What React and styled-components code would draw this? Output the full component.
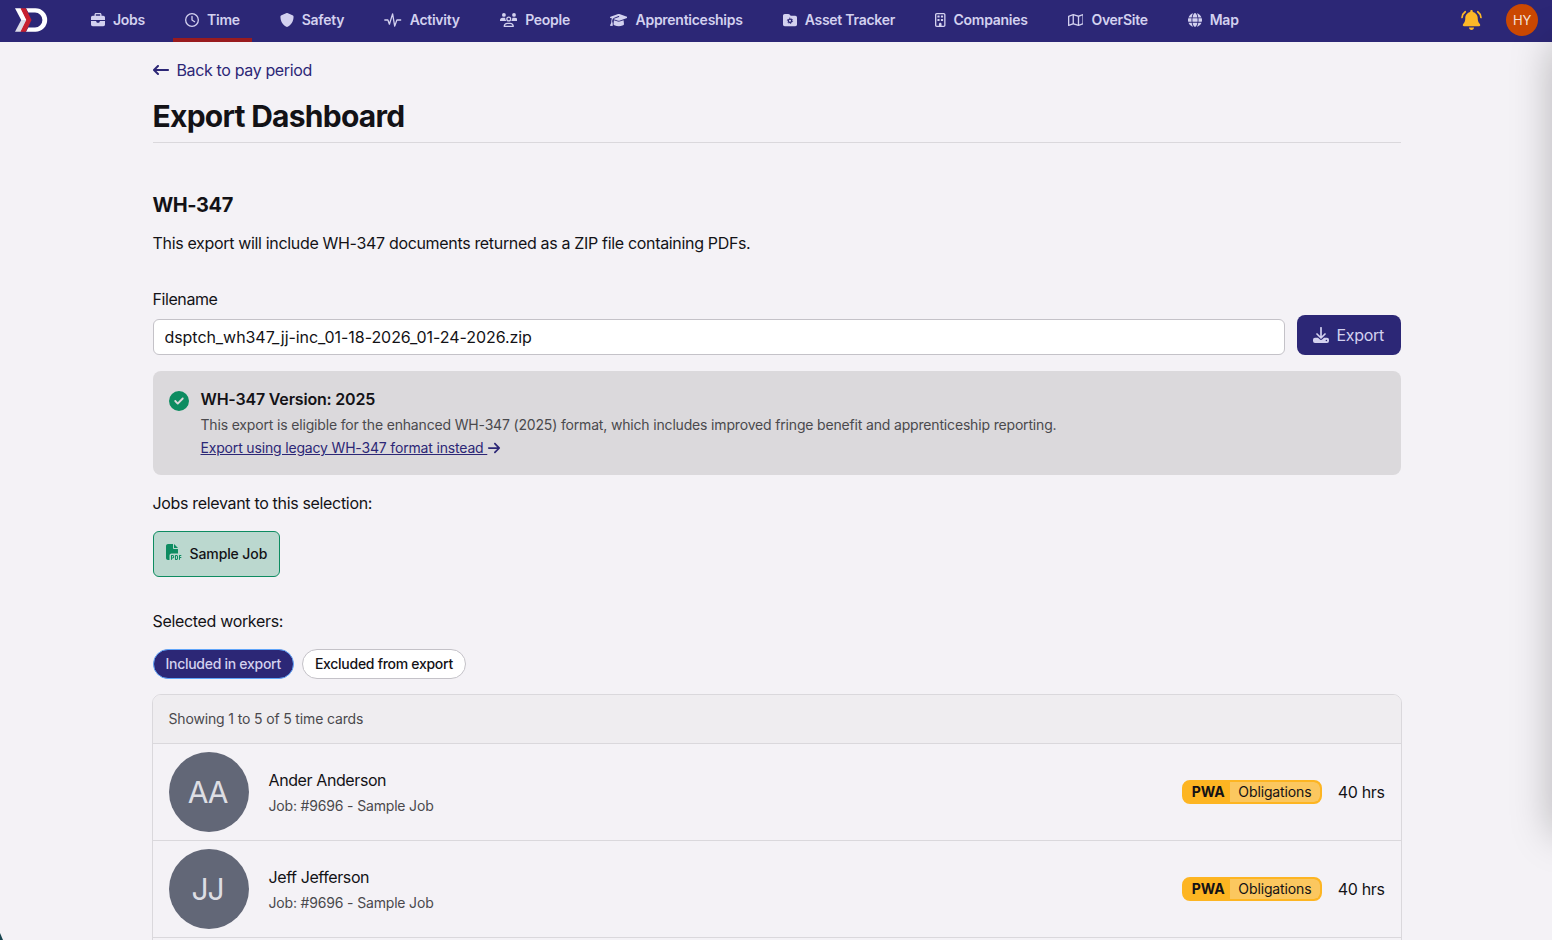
import React from 'react'
import styled, { createGlobalStyle } from 'styled-components'
import {
    FaBriefcase,
    FaRegClock,
    FaShield,
    FaGraduationCap,
    FaRegBuilding,
    FaRegMap,
    FaGlobe,
    FaArrowLeftLong,
    FaArrowRight,
    FaCircleCheck,
    FaFilePdf,
} from 'react-icons/fa6'

const GlobalStyle = createGlobalStyle`
    *, *::before, *::after {
        box-sizing: border-box;
    }

    body {
        margin: 0;
        background: #f4f2f6;
        color: #131216;
        font-family: Inter, 'Liberation Sans', sans-serif;
        font-size: 16px;
        line-height: 24px;
        letter-spacing: -0.36px;
        overflow: hidden;
    }

    h1, h2, h3, p {
        margin: 0;
    }

    button, input {
        font: inherit;
        letter-spacing: inherit;
    }

    svg {
        display: block;
        flex: none;
    }
`

const Logo = () => (
    <svg width="34" height="24" viewBox="0 0 34 24">
        <path d="M12 .3h9.500a11.700 11.700 0 0 1 0 23.400H12l2.300-4.300H21a7.400 7.400 0 0 0 0-14.800h-6.700z" fill="#fff" />
        <path d="M1 .3h6L13 12H7.200z" fill="#fff" />
        <path d="M7.200 12H13L7 23.700H1z" fill="#dcdce8" />
        <path d="M6.500 .3h5.300L17.500 12l-5.700 11.700H6.500L12.300 12z" fill="#c8202f" />
    </svg>
)

const PulseIcon = () => (
    <svg width="17.5" height="14" viewBox="0 0 17.5 14" fill="none" stroke="currentColor" strokeWidth="1.3" strokeLinecap="round" strokeLinejoin="round">
        <path d="M0.8 7h3.1l1.5 4.2L8.6 0.9l2.1 12.2L12.9 7h3.8" />
    </svg>
)

const PeopleIcon = () => (
    <svg width="17.5" height="14" viewBox="0 0 17.5 14">
        <g fill="currentColor">
            <circle cx="3.9" cy="1.9" r="1.9" />
            <circle cx="14" cy="1.9" r="1.9" />
            <path d="M0 7.3a2.6 2.6 0 0 1 2.6-2.6h1.6c.4 0 .8.1 1 .3A4 4 0 0 0 6.400 8H.6a.6.6 0 0 1-.6-.7zM17.500 7.300a2.600 2.600 0 0 0-2.600-2.600h-1.600c-.4 0-.8.1-1 .3A4 4 0 0 1 11.100 8h5.800a.6.600 0 0 0 .6-.7z" />
        </g>
        <g fill="none" stroke="currentColor" strokeWidth="1.3">
            <circle cx="8.750" cy="6" r="1.900" />
            <path d="M4.200 13.300c.2-1.900 1.500-3 3.200-3h2.700c1.700 0 3 1.100 3.200 3z" strokeLinejoin="round" />
        </g>
    </svg>
)

const FolderGearIcon = () => (
    <svg width="14" height="14" viewBox="0 0 14 14">
        <path d="M1.750 0.900h3.500c.55 0 1.070.26 1.400.7l.53.7c.16.220.42.350.7.350h4.370c.97 0 1.750.78 1.750 1.750v7c0 .97-.78 1.750-1.750 1.750H1.750C.78 13.150 0 12.370 0 11.400V2.650C0 1.680.78.900 1.750.900z" fill="currentColor" />
        <circle cx="7" cy="7.800" r="1.700" fill="none" stroke="#2c2776" strokeWidth="1.300" />
        <circle cx="7" cy="7.800" r="2.650" fill="none" stroke="#2c2776" strokeWidth="0.900" strokeDasharray="1.380 1.395" />
    </svg>
)

const BellIcon = () => (
    <svg width="25" height="20" viewBox="0 0 640 512" fill="#fdb827">
        <path d="M320 0c-17.700 0-32 14.300-32 32v19.200c-73 14.800-128 79.400-128 156.800v18.800c0 47-17.300 92.400-48.500 127.600l-7.400 8.300c-8.400 9.400-10.400 22.900-5.300 34.400S115.400 416 128 416h384c12.600 0 24-7.400 29.200-18.900s3.100-25-5.300-34.400l-7.400-8.300C497.300 319.200 480 273.800 480 226.800V208c0-77.400-55-142-128-156.800V32c0-17.700-14.300-32-32-32zM365.300 493.300c12-12 18.700-28.300 18.700-45.300H256c0 17 6.700 33.300 18.700 45.300S303 512 320 512s33.300-6.700 45.300-18.700z" />
        <path d="M160 44c-48 34-76 84-82 148M480 44c48 34 76 84 82 148" fill="none" stroke="#fdb827" strokeWidth="44" strokeLinecap="round" />
    </svg>
)

const DownloadIcon = () => (
    <svg width="16" height="16" viewBox="0 0 16 16">
        <path d="M2 10.800h3l1.600 1.500a2 2 0 0 0 2.800 0l1.600-1.500h3a2 2 0 0 1 2 2v1.200a2 2 0 0 1-2 2H2a2 2 0 0 1-2-2v-1.200a2 2 0 0 1 2-2z" fill="currentColor" />
        <path d="M8 .8v9.800M4 7l4 4 4-4" fill="none" stroke="currentColor" strokeWidth="1.700" strokeLinecap="round" strokeLinejoin="round" />
        <circle cx="13.400" cy="13.400" r=".75" fill="#2c2776" />
    </svg>
)

const navItems = [
    { label: 'Jobs', icon: <FaBriefcase /> },
    { label: 'Time', icon: <FaRegClock />, active: true },
    { label: 'Safety', icon: <FaShield /> },
    { label: 'Activity', icon: <PulseIcon />, width: 17.5 },
    { label: 'People', icon: <PeopleIcon />, width: 17.5 },
    { label: 'Apprenticeships', icon: <FaGraduationCap />, width: 17.5 },
    { label: 'Asset Tracker', icon: <FolderGearIcon /> },
    { label: 'Companies', icon: <FaRegBuilding />, width: 10.5 },
    { label: 'OverSite', icon: <FaRegMap />, width: 15.75 },
    { label: 'Map', icon: <FaGlobe /> },
]

const workers = [
    { initials: 'AA', name: 'Ander Anderson', job: 'Job: #9696 - Sample Job', hours: '40 hrs' },
    { initials: 'JJ', name: 'Jeff Jefferson', job: 'Job: #9696 - Sample Job', hours: '40 hrs' },
]

const App = () => {
    return (
        <Page>
            <GlobalStyle />
            <NavBar>
                <Logo />
                <NavList>
                    {navItems.map((item) => (
                        <NavItem key={item.label} $active={item.active}>
                            <NavIcon $width={item.width || 14}>{item.icon}</NavIcon>
                            {item.label}
                        </NavItem>
                    ))}
                </NavList>
                <BellIcon />
                <UserBadge>HY</UserBadge>
            </NavBar>

            <Content>
                <BackLink>
                    <FaArrowLeftLong size={16} />
                    Back to pay period
                </BackLink>
                <Title>Export Dashboard</Title>

                <SectionTitle>WH-347</SectionTitle>
                <Description>This export will include WH-347 documents returned as a ZIP file containing PDFs.</Description>

                <FileRow>
                    <Field>
                        <label htmlFor="filename">Filename</label>
                        <FileInput id="filename" defaultValue="dsptch_wh347_jj-inc_01-18-2026_01-24-2026.zip" />
                    </Field>
                    <ExportButton>
                        <DownloadIcon />
                        Export
                    </ExportButton>
                </FileRow>

                <Notice>
                    <FaCircleCheck size={20} />
                    <div>
                        <NoticeTitle>WH-347 Version: 2025</NoticeTitle>
                        <NoticeText>
                            This export is eligible for the enhanced WH-347 (2025) format, which includes improved fringe benefit and apprenticeship reporting.
                        </NoticeText>
                        <LegacyLink>
                            <span>Export using legacy WH-347 format instead&nbsp;</span>
                            <FaArrowRight size={14} />
                        </LegacyLink>
                    </div>
                </Notice>

                <Label>Jobs relevant to this selection:</Label>
                <JobChip>
                    <FaFilePdf size={16} />
                    Sample Job
                </JobChip>

                <Label>Selected workers:</Label>
                <Filters>
                    <Pill $selected>Included in export</Pill>
                    <Pill>Excluded from export</Pill>
                </Filters>

                <Cards>
                    <CardsHeader>Showing 1 to 5 of 5 time cards</CardsHeader>
                    {workers.map((worker) => (
                        <WorkerRow key={worker.name}>
                            <Avatar>{worker.initials}</Avatar>
                            <WorkerInfo>
                                <WorkerName>{worker.name}</WorkerName>
                                <WorkerJob>{worker.job}</WorkerJob>
                            </WorkerInfo>
                            <Tag>
                                <TagName>PWA</TagName>
                                <TagValue>Obligations</TagValue>
                            </Tag>
                            <Hours>{worker.hours}</Hours>
                        </WorkerRow>
                    ))}
                    <WorkerRow />
                </Cards>
            </Content>
            <DrawerShadow />
            <Corner />
        </Page>
    )
}

export default App

const Page = styled.div`
    position: relative;
    height: 940px;
    overflow: hidden;
`

const NavBar = styled.nav`
    display: flex;
    align-items: center;
    height: 42px;
    padding: 0 14px;
    padding-bottom: 2px;
    background: #2c2776;
`

const NavList = styled.div`
    display: flex;
    flex: 1;
    gap: 16px;
    margin-left: 31px;
`

const NavItem = styled.a`
    display: flex;
    align-items: center;
    gap: 8px;
    height: 44px;
    padding: 0 12px;
    border-top: 4px solid transparent;
    border-bottom: 4px solid ${(props) => (props.$active ? '#991b1e' : 'transparent')};
    color: #d3d1ef;
    font-size: 14px;
    font-weight: 600;
    line-height: 20px;
    letter-spacing: -0.265px;
    white-space: nowrap;
`

const NavIcon = styled.span`
    display: flex;
    justify-content: center;
    width: ${(props) => props.$width}px;

    svg {
        height: 14px;
        width: ${(props) => props.$width}px;
    }
`

const UserBadge = styled.div`
    display: flex;
    align-items: center;
    justify-content: center;
    width: 32px;
    height: 32px;
    margin-left: 22px;
    border-radius: 50%;
    background: #cb4802;
    color: #f4e3dc;
    font-size: 13px;
    letter-spacing: -0.2px;
`

const Content = styled.main`
    width: 1248px;
    margin-left: 152.5px;
    padding-top: 16px;
`

const BackLink = styled.a`
    display: flex;
    align-items: center;
    gap: 8px;
    color: #2c2776;
`

const Title = styled.h1`
    padding: 16px 0 7px;
    border-bottom: 1px solid #dad8dc;
    font-size: 30px;
    font-weight: 700;
    line-height: 37px;
    letter-spacing: -0.74px;
`

const SectionTitle = styled.h2`
    margin-top: 48px;
    font-size: 20px;
    font-weight: 700;
    line-height: 28px;
    letter-spacing: -0.45px;
`

const Description = styled.p`
    margin-top: 12px;
    letter-spacing: -0.33px;
`

const FileRow = styled.div`
    display: flex;
    align-items: flex-end;
    gap: 12px;
    margin-top: 32px;
`

const Field = styled.div`
    display: flex;
    flex: 1;
    flex-direction: column;
    gap: 8px;
    letter-spacing: -0.42px;
`

const FileInput = styled.input`
    height: 36px;
    padding: 0 11px;
    border: 1px solid #c4c2c8;
    border-radius: 6px;
    outline: none;
    background: #fff;
    color: #131216;
    letter-spacing: -0.06px;
`

const ExportButton = styled.button`
    display: flex;
    align-items: center;
    gap: 8px;
    width: 104px;
    height: 40px;
    padding: 0 16px;
    border: none;
    border-radius: 8px;
    background: #2c2776;
    color: #d3d1ef;
    letter-spacing: -0.3px;
`

const Notice = styled.section`
    display: flex;
    gap: 12px;
    height: 104px;
    margin-top: 16px;
    padding: 16px;
    border-radius: 8px;
    background: #dbd9dc;

    > svg {
        margin-top: 3.5px;
        color: #0d8c61;
    }
`

const NoticeTitle = styled.h3`
    font-size: 16px;
    font-weight: 600;
    line-height: 24px;
    letter-spacing: -0.19px;
`

const NoticeText = styled.p`
    margin-top: 4px;
    color: #4a494d;
    font-size: 14px;
    line-height: 20px;
    letter-spacing: -0.168px;
`

const LegacyLink = styled.a`
    display: flex;
    align-items: center;
    margin-top: 3px;
    color: #2c2776;
    font-size: 14px;
    line-height: 20px;
    letter-spacing: -0.17px;

    span {
        text-decoration: underline;
    }
`

const Label = styled.p`
    margin-top: 16px;
    letter-spacing: -0.33px;
`

const JobChip = styled.div`
    display: flex;
    align-items: center;
    gap: 8px;
    width: 127px;
    height: 46px;
    margin: 16px 0 32px;
    padding-left: 12px;
    border: 1px solid #0d8c61;
    border-radius: 6px;
    background: #bbd8cf;
    font-size: 14px;
    font-weight: 500;
    letter-spacing: -0.1px;

    svg {
        margin-top: -4px;
        color: #0d8c61;
    }
`

const Filters = styled.div`
    display: flex;
    gap: 8px;
    margin-top: 16px;
`

const Pill = styled.button`
    height: 30px;
    padding: 0 12px;
    border: 1px solid ${(props) => (props.$selected ? '#60a5fa' : '#c4c2c8')};
    border-radius: 15px;
    background: ${(props) => (props.$selected ? '#2c2776' : '#fff')};
    color: ${(props) => (props.$selected ? '#d3d1ef' : '#131216')};
    font-size: 14px;
    font-weight: 500;
    line-height: 20px;
    letter-spacing: -0.28px;
`

const Cards = styled.section`
    margin: 15px -1px 0;
    border: 1px solid #dad8dc;
    border-radius: 9px;
`

const CardsHeader = styled.header`
    padding: 14px 16px;
    border-radius: 8px 8px 0 0;
    background: #efedf0;
    color: #4a494d;
    font-size: 14px;
    line-height: 20px;
    letter-spacing: -0.15px;
`

const WorkerRow = styled.div`
    display: flex;
    align-items: center;
    height: 97px;
    padding: 0 16px;
    border-top: 1px solid #dad8dc;
`

const Avatar = styled.div`
    display: flex;
    align-items: center;
    justify-content: center;
    width: 80px;
    height: 80px;
    padding-right: 2px;
    border-radius: 50%;
    background: #626777;
    color: #dddee4;
    font-size: 30px;
    letter-spacing: -1.2px;
`

const WorkerInfo = styled.div`
    flex: 1;
    margin-left: 20px;
`

const WorkerName = styled.p`
    letter-spacing: -0.4px;
`

const WorkerJob = styled.p`
    margin-top: 4px;
    color: #4a494d;
    font-size: 14px;
    line-height: 20px;
    letter-spacing: -0.17px;
`

const Tag = styled.div`
    display: flex;
    width: 140px;
    height: 24px;
    border: 2px solid #fdb522;
    border-radius: 8px;
    overflow: hidden;
    background: #fdb522;
    font-size: 14px;
    line-height: 20px;
    letter-spacing: -0.13px;
`

const TagName = styled.span`
    width: 46px;
    padding-left: 8px;
    font-weight: 700;
`

const TagValue = styled.span`
    flex: 1;
    padding-left: 8.5px;
    border-radius: 0 6px 6px 0;
    background: #fbc75f;
`

const Hours = styled.span`
    margin-left: 16px;
    letter-spacing: -0.37px;
`

const DrawerShadow = styled.div`
    position: absolute;
    top: 44px;
    left: 1552px;
    width: 400px;
    height: 790px;
    box-shadow: 0 0 38px rgba(0, 0, 0, 0.26);
`

const Corner = styled.div`
    position: absolute;
    bottom: 0;
    left: 0;
    width: 3px;
    height: 7px;
    background: #17444f;
    clip-path: polygon(0 0, 100% 100%, 0 100%);
`
